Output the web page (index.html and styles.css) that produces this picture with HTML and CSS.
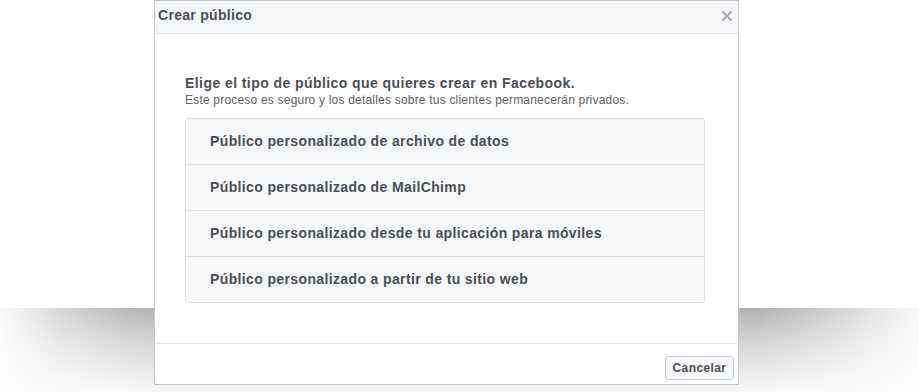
FILE: index.html
```html
<!DOCTYPE html>
<html lang="es">
<head>
<meta charset="utf-8">
<title>Crear público</title>
<link rel="stylesheet" href="styles.css">
</head>
<body>
<div class="stage">
  <div class="shadow"></div>
  <div class="dialog">
    <div class="dialog-header">
      <span class="dialog-title">Crear público</span>
      <svg class="close" width="10" height="10" viewBox="0 0 10 10" aria-hidden="true">
        <path d="M1 1 L9 9 M9 1 L1 9" stroke="#a9acb1" stroke-width="2.2" stroke-linecap="square" fill="none"/>
      </svg>
    </div>
    <div class="dialog-body">
      <h2 class="lead">Elige el tipo de público que quieres crear en Facebook.</h2>
      <p class="sub">Este proceso es seguro y los detalles sobre tus clientes permanecerán privados.</p>
      <ul class="options">
        <li class="option">Público personalizado de archivo de datos</li>
        <li class="option">Público personalizado de MailChimp</li>
        <li class="option">Público personalizado desde tu aplicación para móviles</li>
        <li class="option">Público personalizado a partir de tu sitio web</li>
      </ul>
    </div>
    <div class="dialog-footer">
      <button class="btn">Cancelar</button>
    </div>
  </div>
</div>
</body>
</html>
```
FILE: styles.css
```css
html, body {
  margin: 0;
  padding: 0;
  background: #fff;
}
body {
  font-family: "Liberation Sans", Arial, Helvetica, sans-serif;
  color: #4b4f56;
  width: 919px;
  height: 392px;
  overflow: hidden;
}
.stage {
  position: relative;
  width: 919px;
  height: 392px;
}
.shadow {
  position: absolute;
  left: 0;
  top: 308px;
  width: 919px;
  height: 84px;
  background: linear-gradient(to right, #fbfbfb 0px, #d6d6d6 60px, #b8b8b8 130px, #b3b3b3 160px, #b3b3b3 760px, #c2c2c2 800px, #e2e2e2 870px, #f8f8f8 919px);
  -webkit-mask-image: linear-gradient(to bottom, #000 0px, rgba(0,0,0,0.55) 35px, rgba(0,0,0,0.2) 70px, rgba(0,0,0,0.1) 84px);
  mask-image: linear-gradient(to bottom, #000 0px, rgba(0,0,0,0.55) 35px, rgba(0,0,0,0.2) 70px, rgba(0,0,0,0.1) 84px);
}
.dialog {
  position: relative;
  margin-left: 154px;
  width: 583px;
  height: 383px;
  border: 1px solid #c5c7cb;
  background: #fff;
  display: flex;
  flex-direction: column;
}
.dialog-header {
  height: 32px;
  background: #f6f7f9;
  border-bottom: 1px solid #e5e5e5;
  display: flex;
  align-items: center;
  justify-content: space-between;
  padding: 0 6px 0 3px;
}
.dialog-title {
  font-size: 14px;
  font-weight: bold;
  letter-spacing: 0.3px;
  color: #4b4f56;
  margin-top: -5px;
}
.close {
  display: block;
  margin-top: -3px;
}
.dialog-body {
  height: 309px;
  padding: 40px 0 0 30px;
  box-sizing: border-box;
}
.lead {
  margin: 0;
  font-size: 14px;
  font-weight: bold;
  letter-spacing: 0.43px;
  line-height: 18px;
  color: #4b4f56;
}
.sub {
  margin: 1px 0 0;
  font-size: 12px;
  letter-spacing: 0.2px;
  line-height: 15px;
  color: #5d6167;
}
.options {
  list-style: none;
  margin: 10px 0 0;
  padding: 0;
  width: 518px;
  border: 1px solid #dddfe2;
  border-radius: 3px;
  background: #f6f7f9;
}
.option {
  height: 45px;
  line-height: 45px;
  padding-left: 24px;
  font-size: 14px;
  font-weight: bold;
  letter-spacing: 0.37px;
  color: #4b4f56;
  border-top: 1px solid #dddfe2;
}
.option:first-child {
  border-top: none;
}
.dialog-footer {
  margin: 0 2px;
  border-top: 1px solid #e5e5e5;
  flex: 1;
  display: flex;
  justify-content: flex-end;
  align-items: flex-start;
  padding: 12px 2px 0 0;
}
.btn {
  width: 69px;
  height: 24px;
  border: 1px solid #ccd0d5;
  border-radius: 2px;
  background: #f6f7f9;
  font-family: "Liberation Sans", Arial, sans-serif;
  font-size: 12px;
  font-weight: bold;
  letter-spacing: 0.4px;
  color: #4b4f56;
  padding: 0;
}
```
